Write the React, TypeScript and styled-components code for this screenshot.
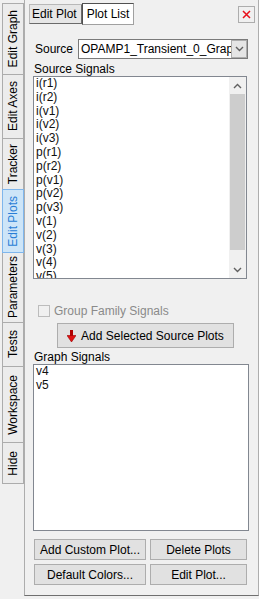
import React from 'react';
import styled, { createGlobalStyle } from 'styled-components';

const GlobalStyle = createGlobalStyle`
    html, body {
        margin: 0;
        padding: 0;
        background: #f0f0f0;
    }
    body {
        font-family: "Liberation Sans", Arial, sans-serif;
        font-size: 12px;
        color: #000;
    }
`;

const Window = styled.div`
    display: flex;
    width: 259px;
    height: 599px;
    background: #f0f0f0;
    overflow: hidden;
`;

const SideTabs = styled.div`
    display: flex;
    flex-direction: column;
    flex-shrink: 0;
    width: 24px;
    padding: 3px 0 0 2px;
    box-sizing: border-box;
`;

const SideTab = styled.div<{ $size: number; $active?: boolean }>`
    position: relative;
    z-index: ${(p) => (p.$active ? 1 : 0)};
    display: flex;
    align-items: center;
    justify-content: center;
    width: 22px;
    height: ${(p) => p.$size}px;
    margin-top: -1px;
    box-sizing: border-box;
    border: 1px solid ${(p) => (p.$active ? '#7fb6ec' : '#acacac')};
    background: ${(p) => (p.$active ? '#cde5f8' : '#ececec')};
    color: ${(p) => (p.$active ? '#2a7ed6' : '#000')};

    &:first-child {
        margin-top: 0;
    }
`;

const SideTabLabel = styled.span`
    writing-mode: vertical-rl;
    transform: rotate(180deg);
    white-space: nowrap;
    line-height: 1;
`;

const Pane = styled.div`
    display: flex;
    flex-direction: column;
    flex: 1;
    height: 596px;
    box-sizing: border-box;
    padding: 3px 9px 0 8px;
    border-left: 1px solid #adadad;
    border-right: 1px solid #adadad;
    border-bottom: 1px solid #6f6f6f;
`;

const Header = styled.div`
    display: flex;
    align-items: flex-start;
    height: 22px;
    margin: 0 -6px 0 -4px;
`;

const PageTab = styled.div<{ $width: number; $active?: boolean }>`
    display: flex;
    align-items: center;
    justify-content: ${(p) => (p.$active ? 'center' : 'flex-start')};
    width: ${(p) => p.$width}px;
    height: ${(p) => (p.$active ? 22 : 20)}px;
    margin-top: ${(p) => (p.$active ? 0 : 1)}px;
    padding-left: ${(p) => (p.$active ? 0 : 2)}px;
    box-sizing: border-box;
    border: 1px solid #a0a0a0;
    border-top-color: ${(p) => (p.$active ? '#505050' : '#b8b8b8')};
    border-left-color: ${(p) => (p.$active ? '#505050' : '#b8b8b8')};
    border-right-color: ${(p) => (p.$active ? '#a0a0a0' : '#6a6a6a')};
    border-bottom-color: ${(p) => (p.$active ? '#a0a0a0' : '#6a6a6a')};
    background: ${(p) => (p.$active ? '#fff' : '#e6e6e6')};
    white-space: nowrap;
`;

const CloseButton = styled.div`
    display: flex;
    align-items: center;
    justify-content: center;
    width: 17px;
    height: 17px;
    margin: 3px 0 0 auto;
    box-sizing: border-box;
    border: 1px solid #adadad;
    background: #f0f0f0;
`;

const SourceRow = styled.div`
    display: flex;
    align-items: center;
    height: 20px;
    margin-top: 14px;
`;

const FieldLabel = styled.span`
    width: 43px;
    margin-left: 2px;
`;

const Combo = styled.div`
    display: flex;
    width: 170px;
    height: 20px;
    box-sizing: border-box;
    border: 1px solid #7a7a7a;
    background: #fff;
`;

const ComboText = styled.div`
    flex: 1;
    padding-left: 2px;
    overflow: hidden;
    white-space: nowrap;
    line-height: 18px;
`;

const ComboButton = styled.div`
    display: flex;
    align-items: center;
    justify-content: center;
    width: 16px;
    box-sizing: border-box;
    border: 1px solid #adadad;
    background: #e5e5e5;
`;

const SectionLabel = styled.div<{ $gap: number }>`
    margin: ${(p) => p.$gap}px 0 0 1px;
    line-height: 14px;
`;

const ListBox = styled.div<{ $width: number; $height: number }>`
    display: flex;
    width: ${(p) => p.$width}px;
    height: ${(p) => p.$height}px;
    box-sizing: border-box;
    border: 1px solid #828790;
    background: #fff;
`;

const ListItems = styled.div`
    flex: 1;
    padding-left: 2px;
    overflow: hidden;
`;

const ListItem = styled.div`
    line-height: 13.8px;
    white-space: nowrap;
    color: #111;
`;

const ScrollBar = styled.div`
    display: flex;
    flex-direction: column;
    width: 17px;
    background: #f0f0f0;
`;

const ScrollArrow = styled.div`
    display: flex;
    align-items: center;
    justify-content: center;
    height: 17px;
    flex-shrink: 0;
`;

const ScrollThumb = styled.div<{ $size: number }>`
    height: ${(p) => p.$size}px;
    margin: 0 1px;
    background: #cdcdcd;
`;

const ScrollTrack = styled.div`
    flex: 1;
`;

const CheckRow = styled.label`
    display: flex;
    align-items: center;
    gap: 4px;
    height: 14px;
    margin: 25px 0 0 5px;
    color: #8a8a8a;
`;

const CheckBox = styled.span`
    width: 12px;
    height: 12px;
    box-sizing: border-box;
    border: 1px solid #bcbcbc;
    background: #f0f0f0;
`;

const Button = styled.div<{ $width?: number; $height?: number }>`
    display: flex;
    align-items: center;
    justify-content: center;
    gap: 5px;
    width: ${(p) => (p.$width ? `${p.$width}px` : 'auto')};
    height: ${(p) => p.$height ?? 21}px;
    box-sizing: border-box;
    border: 1px solid #adadad;
    background: #e1e1e1;
    white-space: nowrap;
`;

const AddButton = styled(Button)`
    margin: 5px 0 0 24px;
`;

const ButtonGrid = styled.div`
    display: grid;
    grid-template-columns: 112px 97px;
    gap: 4px;
    margin: 8px 0 0 1px;
`;

const sideTabs: [string, number][] = [
    ['Edit Graph', 72],
    ['Edit Axes', 65],
    ['Tracker', 52],
    ['Edit Plots', 64],
    ['Parameters', 71],
    ['Tests', 45],
    ['Workspace', 77],
    ['Hide', 42],
];

const sourceSignals = [
    'i(r1)', 'i(r2)', 'i(v1)', 'i(v2)', 'i(v3)',
    'p(r1)', 'p(r2)', 'p(v1)', 'p(v2)', 'p(v3)',
    'v(1)', 'v(2)', 'v(3)', 'v(4)', 'v(5)', 'v(6)',
];

const graphSignals = ['v4', 'v5'];

const Chevron = ({ up }: { up?: boolean }) => (
    <svg width="9" height="6" viewBox="0 0 9 6">
        <polyline
            points={up ? '1,5 4.5,1.5 8,5' : '1,1 4.5,4.5 8,1'}
            fill="none"
            stroke="#606060"
            strokeWidth="1.4"
        />
    </svg>
);

const CloseIcon = () => (
    <svg width="9" height="9" viewBox="0 0 9 9">
        <path d="M1 1 L8 8 M8 1 L1 8" stroke="#e8101a" strokeWidth="1.5" />
    </svg>
);

const DownArrowIcon = () => (
    <svg width="9" height="12" viewBox="0 0 9 12">
        <rect x="3" y="0" width="3" height="6" fill="#b00000" />
        <polygon points="0,5.5 9,5.5 4.5,12" fill="#e01010" stroke="#900" strokeWidth="0.6" />
    </svg>
);

export default function App() {
    return (
        <Window>
            <GlobalStyle />
            <SideTabs>
                {sideTabs.map(([name, size]) => (
                    <SideTab key={name} $size={size} $active={name === 'Edit Plots'}>
                        <SideTabLabel>{name}</SideTabLabel>
                    </SideTab>
                ))}
            </SideTabs>

            <Pane>
                <Header>
                    <PageTab $width={53}>Edit Plot</PageTab>
                    <PageTab $width={52} $active>
                        Plot List
                    </PageTab>
                    <CloseButton>
                        <CloseIcon />
                    </CloseButton>
                </Header>

                <SourceRow>
                    <FieldLabel>Source</FieldLabel>
                    <Combo>
                        <ComboText>OPAMP1_Transient_0_Graph</ComboText>
                        <ComboButton>
                            <Chevron />
                        </ComboButton>
                    </Combo>
                </SourceRow>

                <SectionLabel $gap={3}>Source Signals</SectionLabel>
                <ListBox $width={214} $height={203}>
                    <ListItems>
                        {sourceSignals.map((s) => (
                            <ListItem key={s}>{s}</ListItem>
                        ))}
                    </ListItems>
                    <ScrollBar>
                        <ScrollArrow>
                            <Chevron up />
                        </ScrollArrow>
                        <ScrollThumb $size={156} />
                        <ScrollTrack />
                        <ScrollArrow>
                            <Chevron />
                        </ScrollArrow>
                    </ScrollBar>
                </ListBox>

                <CheckRow>
                    <CheckBox />
                    Group Family Signals
                </CheckRow>

                <AddButton $width={177} $height={25}>
                    <DownArrowIcon />
                    Add Selected Source Plots
                </AddButton>

                <SectionLabel $gap={2}>Graph Signals</SectionLabel>
                <ListBox $width={216} $height={167}>
                    <ListItems>
                        {graphSignals.map((s) => (
                            <ListItem key={s}>{s}</ListItem>
                        ))}
                    </ListItems>
                </ListBox>

                <ButtonGrid>
                    <Button>Add Custom Plot...</Button>
                    <Button>Delete Plots</Button>
                    <Button>Default Colors...</Button>
                    <Button>Edit Plot...</Button>
                </ButtonGrid>
            </Pane>
        </Window>
    );
}
